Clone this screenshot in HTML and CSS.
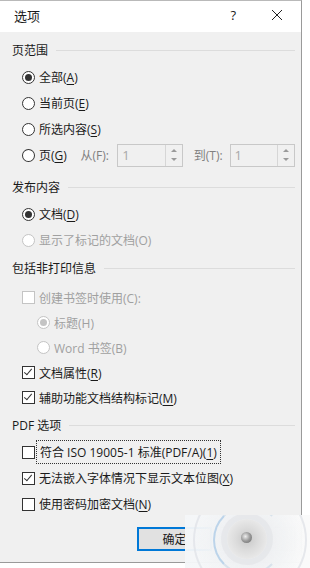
FILE: index.html
```html
<!DOCTYPE html>
<html lang="zh-CN">
<head>
    <meta charset="UTF-8">
    <meta name="viewport" content="width=device-width, initial-scale=1.0">
    <title>选项</title>
    <link rel="stylesheet" href="styles.css">
</head>
<body>
    <div class="dialog">
        <div class="titlebar">
            <span class="title">选项</span>
            <span class="help">?</span>
            <svg class="close" width="12" height="12" viewBox="0 0 12 12">
                <path d="M1 1L11 11M11 1L1 11" stroke="#222" stroke-width="1"/>
            </svg>
        </div>

        <div class="content">
            <!-- 页范围 -->
            <div class="group-title">页范围</div>
            <div class="row first">
                <span class="radio checked"></span>
                <span>全部(<u>A</u>)</span>
            </div>
            <div class="row">
                <span class="radio"></span>
                <span>当前页(<u>E</u>)</span>
            </div>
            <div class="row">
                <span class="radio"></span>
                <span>所选内容(<u>S</u>)</span>
            </div>
            <div class="row">
                <span class="radio"></span>
                <span class="page-label">页(<u>G</u>)</span>
                <span class="field-label">从(F):</span>
                <div class="spin">
                    <span class="spin-value">1</span>
                    <div class="spin-btns">
                        <span class="arrow up"></span>
                        <span class="arrow down"></span>
                    </div>
                </div>
                <span class="field-label to">到(T):</span>
                <div class="spin">
                    <span class="spin-value">1</span>
                    <div class="spin-btns">
                        <span class="arrow up"></span>
                        <span class="arrow down"></span>
                    </div>
                </div>
            </div>

            <!-- 发布内容 -->
            <div class="group-title gap-lg">发布内容</div>
            <div class="row first">
                <span class="radio checked"></span>
                <span>文档(<u>D</u>)</span>
            </div>
            <div class="row disabled">
                <span class="radio"></span>
                <span>显示了标记的文档(O)</span>
            </div>

            <!-- 包括非打印信息 -->
            <div class="group-title">包括非打印信息</div>
            <div class="row first short disabled">
                <span class="check"></span>
                <span>创建书签时使用(C):</span>
            </div>
            <div class="row short disabled indent">
                <span class="radio checked"></span>
                <span>标题(H)</span>
            </div>
            <div class="row short disabled indent">
                <span class="radio"></span>
                <span>Word 书签(B)</span>
            </div>
            <div class="row short">
                <span class="check checked"></span>
                <span>文档属性(<u>R</u>)</span>
            </div>
            <div class="row short">
                <span class="check checked"></span>
                <span>辅助功能文档结构标记(<u>M</u>)</span>
            </div>

            <!-- PDF 选项 -->
            <div class="group-title">PDF 选项</div>
            <div class="row first">
                <span class="check"></span>
                <span class="focus">符合 ISO 19005-1 标准(PDF/A)(<u>1</u>)</span>
            </div>
            <div class="row">
                <span class="check checked"></span>
                <span>无法嵌入字体情况下显示文本位图(<u>X</u>)</span>
            </div>
            <div class="row">
                <span class="check"></span>
                <span>使用密码加密文档(<u>N</u>)</span>
            </div>

            <div class="actions">
                <button class="button primary">确定</button>
                <button class="button">取消</button>
            </div>
        </div>
    </div>

    <!-- loading overlay that sits over the corner of the dialog -->
    <div class="overlay">
        <div class="ring outer"></div>
        <div class="ring middle"></div>
        <div class="ring inner"></div>
        <div class="knob"></div>
    </div>
</body>
</html>
```

FILE: styles.css
```css
body {
    margin: 0;
    background-color: #fff;
    font-family: "Open Sans", "Noto Sans CJK SC", "Microsoft YaHei", sans-serif;
    font-size: 12px;
    color: #1a1a1a;
    width: 310px;
    height: 568px;
    position: relative;
    overflow: hidden;
}
.dialog {
    width: 302px;
    height: 563px;
    border-top: 1px solid #b9b9b9;
    border-right: 1px solid #9a9a9a;
    border-bottom: 1px solid #9a9a9a;
    box-sizing: border-box;
    display: flex;
    flex-direction: column;
}
.titlebar {
    height: 31px;
    background-color: #fff;
    display: flex;
    align-items: center;
    padding-left: 14px;
    padding-right: 18px;
    padding-bottom: 3px;
    box-sizing: border-box;
}
.title {
    font-size: 13px;
    flex: 1;
}
.help {
    font-size: 13px;
    margin-right: 35px;
}
.content {
    flex: 1;
    background-color: #f0f0f0;
    padding: 8px 6px 0 12px;
    display: flex;
    flex-direction: column;
}
.group-title {
    height: 20px;
    display: flex;
    align-items: center;
    margin-top: 5px;
}
.group-title:first-child {
    margin-top: 0;
}
.group-title::after {
    content: "";
    flex: 1;
    height: 1px;
    background-color: #dcdcdc;
    margin-left: 8px;
}
.gap-lg {
    margin-top: 9px;
}
.row {
    height: 26px;
    display: flex;
    align-items: center;
    padding-left: 10px;
}
.row.first {
    margin-top: 4px;
}
.row.short {
    height: 25px;
}
.row.short.first {
    margin-top: 7px;
}
.row.indent {
    padding-left: 25px;
}
.row.disabled {
    color: #a0a0a0;
}
u {
    text-decoration-thickness: 1px;
    text-underline-offset: 2px;
}

/* radio buttons */
.radio {
    width: 13px;
    height: 13px;
    border: 1px solid #333;
    border-radius: 50%;
    box-sizing: border-box;
    background-color: #fff;
    margin-right: 4px;
    display: flex;
    align-items: center;
    justify-content: center;
}
.radio.checked::after {
    content: "";
    width: 7px;
    height: 7px;
    border-radius: 50%;
    background-color: #333;
}
.disabled .radio {
    border-color: #c4c4c4;
}
.disabled .radio.checked::after {
    background-color: #c4c4c4;
}

/* check boxes */
.check {
    width: 13px;
    height: 13px;
    border: 1px solid #333;
    box-sizing: border-box;
    background-color: #fff;
    margin-right: 4px;
    position: relative;
}
.check.checked::after {
    content: "";
    position: absolute;
    left: 3px;
    top: 0px;
    width: 3px;
    height: 7px;
    border-right: 1px solid #333;
    border-bottom: 1px solid #333;
    transform: rotate(40deg);
}
.disabled .check {
    border-color: #c4c4c4;
}

.focus {
    outline: 1px dotted #333;
    outline-offset: 2px;
    padding: 0 1px;
}

/* page range spin boxes */
.page-label {
    width: 42px;
}
.field-label {
    color: #808080;
    width: 37px;
}
.field-label.to {
    margin-left: 11px;
    width: 36px;
}
.spin {
    width: 66px;
    height: 23px;
    box-sizing: border-box;
    border: 1px solid #c8c8c8;
    background-color: #f0f0f0;
    display: flex;
}
.spin-value {
    flex: 1;
    color: #a8a8a8;
    font-size: 13px;
    padding-left: 4px;
    line-height: 21px;
}
.spin-btns {
    width: 16px;
    border-left: 1px solid #d6d6d6;
    display: flex;
    flex-direction: column;
    align-items: center;
    justify-content: space-around;
    padding: 2px 0;
}
.arrow {
    width: 0;
    height: 0;
    border-left: 3px solid transparent;
    border-right: 3px solid transparent;
}
.arrow.up {
    border-bottom: 3px solid #9a9a9a;
}
.arrow.down {
    border-top: 3px solid #9a9a9a;
}

/* buttons */
.actions {
    display: flex;
    margin-top: 10px;
    padding-left: 125px;
    gap: 8px;
}
.button {
    width: 75px;
    height: 24px;
    box-sizing: border-box;
    background-color: #e1e1e1;
    border: 1px solid #adadad;
    font-family: inherit;
    font-size: 12px;
    color: #1a1a1a;
    padding: 0;
}
.button.primary {
    border: 2px solid #0078d7;
}

/* blurry loading graphic over the bottom-right corner */
.overlay {
    position: absolute;
    left: 185px;
    top: 515px;
    width: 125px;
    height: 53px;
    background: linear-gradient(to right, rgba(244, 246, 248, 0.96), rgba(250, 250, 250, 0.98));
    overflow: hidden;
}
.ring {
    position: absolute;
    border-radius: 50%;
}
.ring.outer {
    left: 8px;
    top: -32px;
    width: 110px;
    height: 110px;
    border: 2px solid rgba(225, 228, 232, 0.8);
    background: radial-gradient(circle, rgba(230, 232, 236, 0.9) 0%, rgba(238, 240, 242, 0.6) 45%, rgba(248, 248, 248, 0) 70%);
}
.ring.middle {
    left: 28px;
    top: -10px;
    width: 66px;
    height: 66px;
    border: 2px solid transparent;
    border-left-color: #bcd4ea;
    border-top-color: rgba(200, 215, 230, 0.6);
    border-bottom-color: rgba(200, 215, 230, 0.6);
}
.ring.inner {
    left: 42px;
    top: 4px;
    width: 40px;
    height: 40px;
    background: radial-gradient(circle, #c8c8c8 0%, #dcdcdc 40%, #e8e8e8 70%, rgba(240, 240, 240, 0) 100%);
    box-shadow: 0 0 0 6px rgba(225, 227, 230, 0.6);
}
.knob {
    position: absolute;
    left: 56px;
    top: 17px;
    width: 11px;
    height: 11px;
    border-radius: 50%;
    background: radial-gradient(circle at 40% 40%, #eee 0%, #999 50%, #666 100%);
}
```
